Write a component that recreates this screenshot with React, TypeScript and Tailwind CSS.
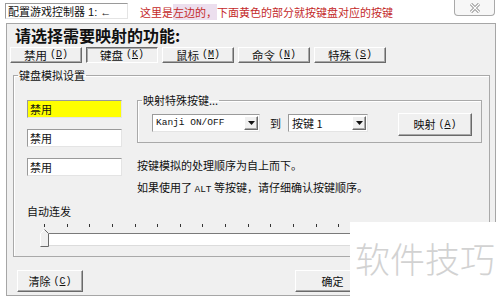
import React from "react";

/* ---------- shared styles ---------- */
const raised =
  "bg-[#f0f0f0] border border-t-white border-l-white border-r-[#6a6a6a] border-b-[#6a6a6a] shadow-[inset_-1px_-1px_0_#a8a8a8]";
const pressed =
  "bg-[#f0f0f0] border border-t-[#6a6a6a] border-l-[#6a6a6a] border-r-white border-b-white shadow-[inset_1px_1px_0_#a8a8a8]";
const sunken =
  "border border-t-[#9a9a9a] border-l-[#9a9a9a] border-r-[#e4e4e4] border-b-[#e4e4e4]";

const TABS = [
  { label: "禁用", key: "D" },
  { label: "键盘", key: "K", active: true },
  { label: "鼠标", key: "M" },
  { label: "命令", key: "N" },
  { label: "特殊", key: "S" },
];

const Arrow = () => (
  <svg width="7" height="4" viewBox="0 0 7 4">
    <polygon points="0,0 7,0 3.5,4" fill="#111" />
  </svg>
);

const Combo = ({ text, width, mono }: { text: string; width: string; mono?: boolean }) => (
  <div className={`flex h-[18px] bg-white ${sunken} ${width}`}>
    <span
      className={`flex-1 pl-[3px] leading-[16px] text-[#111] ${
        mono ? "font-['Liberation_Mono',monospace] text-[9.5px]" : "text-[11px]"
      }`}
    >
      {text}
    </span>
    <div className={`w-[14px] h-[14px] m-px flex items-center justify-center ${raised}`}>
      <Arrow />
    </div>
  </div>
);

const Hotkey = ({ k }: { k: string }) => (
  <span className="ml-[3px] text-[10px] font-['Liberation_Mono',monospace]">
    (<span className="underline">{k}</span>)
  </span>
);

const Thumb = () => (
  <svg width="9" height="18" viewBox="0 0 9 18" className="shrink-0">
    <polygon points="0.5,4.5 4.5,0.5 8.5,4.5 8.5,17.5 0.5,17.5" fill="#f0f0f0" />
    <polyline points="0.5,17 0.5,4.5 4.5,0.5" fill="none" stroke="#fff" />
    <polyline points="4.5,0.5 8.5,4.5 8.5,17.5 0.5,17.5" fill="none" stroke="#6a6a6a" />
  </svg>
);

export default function App() {
  return (
    <div className="relative w-[500px] h-[296px] overflow-hidden bg-white font-['Noto_Sans_CJK_SC','Noto_Sans',sans-serif] text-[#111]">
      {/* title strip */}
      <div className="flex items-start h-[23px]">
        <div className={`ml-[5px] mt-[3px] w-[123px] h-[16px] bg-white ${sunken} text-[11px] leading-[14px] pl-[2px] whitespace-nowrap overflow-hidden`}>
          配置游戏控制器<span className="font-['Liberation_Sans',sans-serif]"> 1: ←</span>
        </div>
        <div className="ml-[12px] mt-[4px] text-[11px] leading-[16px] text-[#c42a2a]">
          这里是<span className="bg-[#ecdfee]">左边的，</span>下面黄色的部分就按键盘对应的按键
        </div>
        <div className="ml-auto mr-[5px] w-[41px] h-[16px] border border-t-0 border-[#a9a9a9] rounded-b-[4px] bg-[#f7f7f7] flex items-center justify-center">
          <svg width="12" height="10" viewBox="0 0 12 10">
            <path d="M2 1 L10 9 M10 1 L2 9" stroke="#8a8a8a" strokeWidth="3" />
            <path d="M2 1 L10 9 M10 1 L2 9" stroke="#fff" strokeWidth="1.2" />
          </svg>
        </div>
      </div>

      {/* dialog panel */}
      <div className="ml-[6px] w-[490px] bg-[#f0f0f0] border border-[#a6a6a6] flex flex-col">
        <div className="h-[22px] pl-[8px] text-[16px] leading-[22px] font-bold">请选择需要映射的功能:</div>

        {/* tabs */}
        <div className="flex gap-[4px] ml-[3px] mt-[1px]">
          {TABS.map((t) => (
            <div
              key={t.key}
              className={`w-[72px] h-[16px] flex items-center justify-center text-[11.5px] leading-[14px] ${
                t.active ? pressed : raised
              }`}
            >
              {t.label}
              <Hotkey k={t.key} />
            </div>
          ))}
        </div>

        {/* keyboard group */}
        <fieldset className="mt-[5px] ml-[6px] mr-[5px] border border-[#a9a9a9] shadow-[inset_1px_1px_0_#fff] pb-[9px]">
          <legend className="ml-[4px] px-[1px] text-[11px] leading-[14px]">键盘模拟设置</legend>

          <div className="flex items-start pl-[13px]">
            <div className="mt-[18px] flex flex-col gap-[11px]">
              <div className={`w-[95px] h-[18px] bg-[#ffff00] ${sunken} text-[11px] leading-[16px] pl-[2px]`}>禁用</div>
              <div className={`w-[95px] h-[18px] bg-white ${sunken} text-[11px] leading-[16px] pl-[2px]`}>禁用</div>
              <div className={`w-[95px] h-[18px] bg-white ${sunken} text-[11px] leading-[16px] pl-[2px]`}>禁用</div>
            </div>

            <div className="ml-[15px] mt-[11px] flex flex-col">
              <fieldset className="w-[345px] border border-[#a9a9a9] shadow-[inset_1px_1px_0_#fff] pt-[7px] pb-[6px]">
                <legend className="ml-[4px] px-[1px] text-[11px] leading-[14px]">映射特殊按键...</legend>
                <div className="flex items-start pl-[14px]">
                  <Combo text="Kanji ON/OFF" width="w-[108px]" mono />
                  <span className="ml-[10px] text-[11px] leading-[18px]">到</span>
                  <Combo text="按键 1" width="ml-[7px] w-[80px]" />
                  <div className={`ml-[30px] -mt-px w-[74px] h-[23px] flex items-center justify-center text-[11px] ${raised}`}>
                    映射<Hotkey k="A" />
                  </div>
                </div>
              </fieldset>
              <div className="mt-[11px] text-[11px] leading-[22px]">
                <div>按键模拟的处理顺序为自上而下。</div>
                <div>
                  如果使用了 <span className="font-['Liberation_Mono',monospace] text-[9.5px]">ALT</span> 等按键，请仔细确认按键顺序。
                </div>
              </div>
            </div>
          </div>

          <div className="pl-[13px] mt-[3px] text-[11px] leading-[14px]">自动连发</div>

          {/* slider */}
          <div className="mt-[6px] pl-[26px] flex flex-col">
            <div className="ml-[4px] w-[431px] h-[4px] flex justify-between">
              {Array.from({ length: 20 }).map((_, i) => (
                <div key={i} className="w-px h-[3px] bg-[#333]" />
              ))}
            </div>
            <div className="mt-px flex items-start">
              <Thumb />
              <div className="mt-[4px] mr-[2px] flex-1 h-[13px] bg-white border-t border-[#7a7a7a] border-b border-b-[#dcdcdc]" />
            </div>
          </div>
        </fieldset>

        {/* bottom buttons */}
        <div className="flex mt-[13px] mb-[3px]">
          <div className={`ml-[10px] w-[66px] h-[22px] flex items-center justify-center text-[11px] ${raised}`}>
            清除<Hotkey k="C" />
          </div>
          <div className={`ml-[212px] w-[75px] h-[22px] flex items-center justify-center text-[11px] ${raised}`}>确定</div>
        </div>
      </div>

      {/* watermark */}
      <div className="absolute left-[350px] top-[222px] w-[150px] h-[74px] bg-white flex items-center justify-center">
        <span className="text-[35px] leading-none font-light text-[#d2d2d2] mt-[-4px]">软件技巧</span>
      </div>
    </div>
  );
}
